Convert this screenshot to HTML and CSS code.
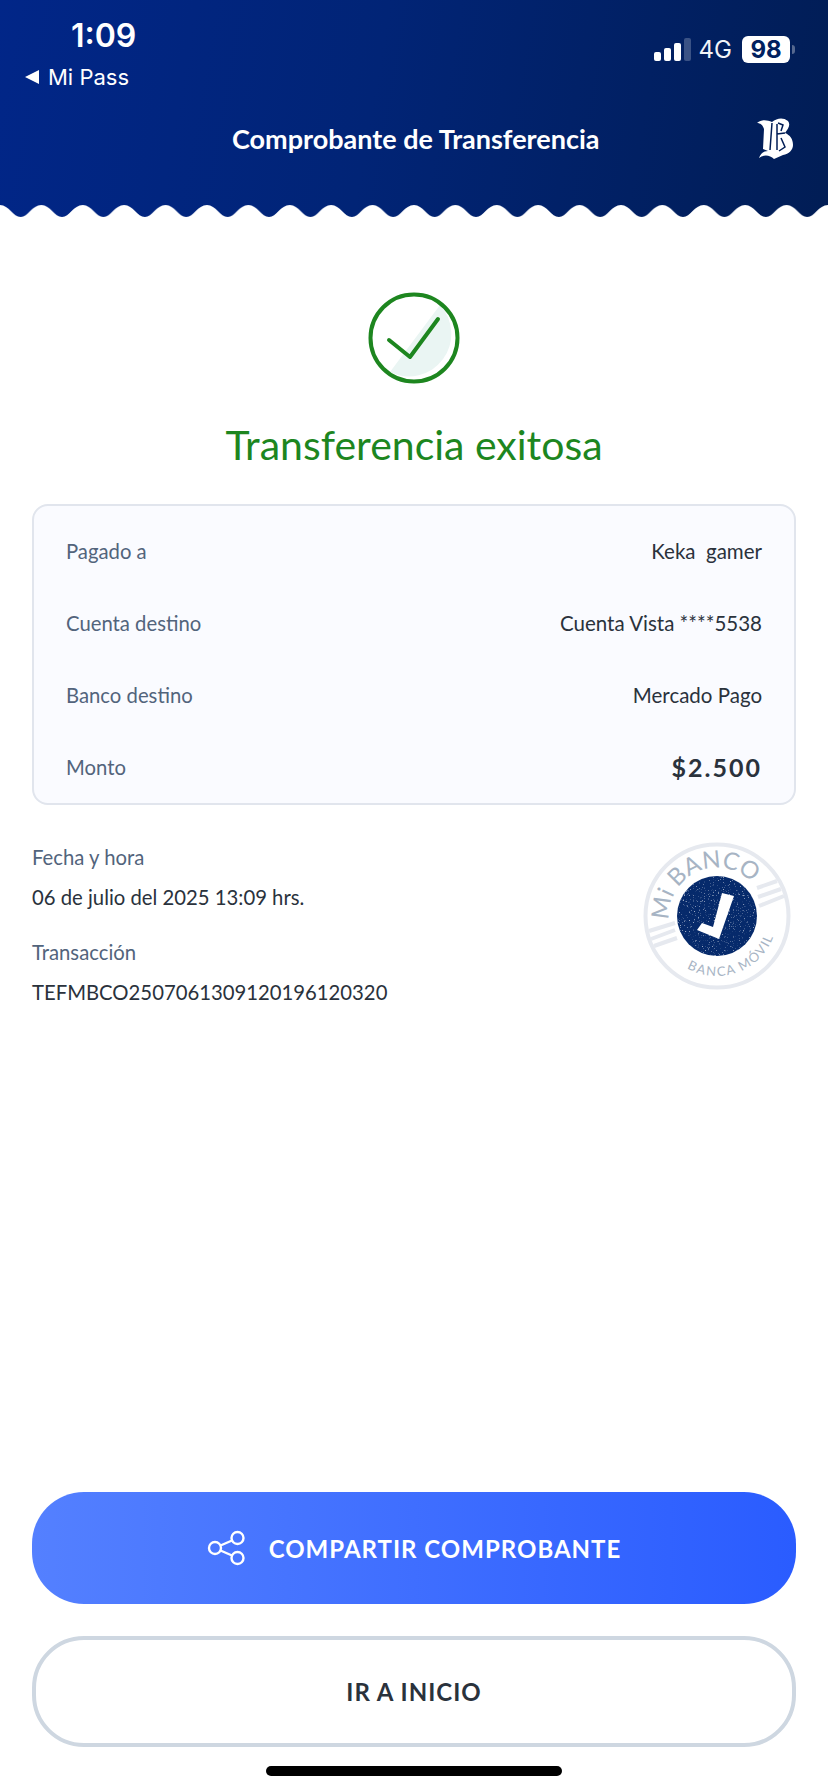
FILE: index.html

```html
<!DOCTYPE html>
<html lang="es">
<head>
  <meta charset="UTF-8" />
  <meta name="viewport" content="width=device-width, initial-scale=1.0" />
  <title>Comprobante de Transferencia</title>
  <link rel="stylesheet" href="styles.css">
</head>
<body>
  <div class="screen">
    <header class="top">
      <div class="status">
        <div class="status-left">
          <div class="clock">1:09</div>
          <div class="back"><span class="back-arrow"></span>Mi Pass</div>
        </div>
        <div class="status-right">
          <div class="signal">
            <span class="bar b1"></span><span class="bar b2"></span><span class="bar b3"></span><span class="bar b4"></span>
          </div>
          <span class="net">4G</span>
          <span class="battery">98</span>
          <span class="battery-tip"></span>
        </div>
      </div>
      <div class="title-row">
        <h1>Comprobante de Transferencia</h1>
        <svg class="logo" viewBox="6 8 38 43" width="38" height="43">
          <path fill="#fff" d="M7 14 C12 10 17 11 22 13 C27 9 33 8 38 12 C41 16 38 20 35 24 C40 26 43 30 43 36 C43 41 39 45 33 46 L24 50 C20 46 14 45 9 49 C11 44 14 42 18 42 L13 40 L14 20 C13 16 10 14 7 14 Z"/>
          <path fill="none" stroke="#011d55" stroke-width="1.5" d="M22 14 L20 41 M27 15 L27 41 M27 25 L35 24 M28 14 L33 16 L31 22 M31 29 L35 38 L29 42"/>
        </svg>
      </div>
      <svg class="wave" width="828" height="12" viewBox="0 0 828 12">
        <defs>
          <pattern id="wavePat" width="41.4" height="12" patternUnits="userSpaceOnUse">
            <path fill="#fff" d="M0 12 V0 C9 0 13 12 20.7 12 C28 12 32 0 41.4 0 V12 Z"/>
          </pattern>
        </defs>
        <rect width="828" height="12" fill="url(#wavePat)"/>
      </svg>
    </header>

    <main class="content">
      <svg class="ok-icon" viewBox="0 0 92 92" width="92" height="92">
        <path fill="#eaf5f3" d="M72 13 A42.5 42.5 0 0 1 22 80 Z"/>
        <circle cx="46" cy="46" r="43.5" fill="none" stroke="#1d861f" stroke-width="4"/>
        <path fill="none" stroke="#1d861f" stroke-width="4" stroke-linecap="round" stroke-linejoin="round" d="M21 48 L42 65 L70 27"/>
      </svg>
      <h2 class="ok-title">Transferencia exitosa</h2>

      <section class="card">
        <div class="row"><span class="lbl">Pagado a</span><span class="val">Keka&nbsp; gamer</span></div>
        <div class="row"><span class="lbl">Cuenta destino</span><span class="val">Cuenta Vista ****5538</span></div>
        <div class="row"><span class="lbl">Banco destino</span><span class="val">Mercado Pago</span></div>
        <div class="row"><span class="lbl">Monto</span><span class="val amount">$2.500</span></div>
      </section>

      <section class="details">
        <div class="detail-text">
          <div class="lbl">Fecha y hora</div>
          <div class="val detail-val">06 de julio del 2025 13:09 hrs.</div>
          <div class="lbl">Transacción</div>
          <div class="val detail-val">TEFMBCO2507061309120196120320</div>
        </div>
        <svg class="stamp" viewBox="0 0 150 154" width="150" height="154">
          <defs>
            <path id="arcTop" d="M27.2 81.1 A48 48 0 1 1 123 77"/>
            <path id="arcBottom" d="M45 129 A60 60 0 0 0 135 77"/>
            <filter id="specks" x="0" y="0" width="100%" height="100%">
              <feTurbulence type="fractalNoise" baseFrequency="0.8" numOctaves="2" seed="4"/>
              <feColorMatrix type="matrix" values="0 0 0 0 1  0 0 0 0 1  0 0 0 0 1  5 0 0 0 -3.1"/>
              <feComposite in2="SourceAlpha" operator="in"/>
            </filter>
          </defs>
          <circle cx="75" cy="77" r="71.5" fill="#fff" stroke="#e6e9ef" stroke-width="4"/>
          <g stroke="#e6e9ef" stroke-width="4">
            <path d="M7 92 L33 84 M9 100 L33 91 M12 107 L35 99 M115 49 L135 42 M116 58 L139 50 M117 67 L142 57"/>
          </g>
          <text class="stamp-big"><textPath href="#arcTop">Mi BANCO</textPath></text>
          <text class="stamp-small"><textPath href="#arcBottom">BANCA MÓVIL</textPath></text>
          <circle cx="75" cy="77" r="40" fill="#062a6b"/>
          <circle cx="75" cy="77" r="40" fill="#000" filter="url(#specks)" opacity=".6"/>
          <path fill="#fff" d="M80 54 L92 57 L77 100 L55 91 L60 84 L71 88 Z"/>
        </svg>
      </section>
    </main>

    <footer class="actions">
      <button class="btn btn-main">
        <svg viewBox="0 0 38 36" width="38" height="36" fill="none" stroke="#fff" stroke-width="2.4">
          <circle cx="8" cy="18" r="6"/><circle cx="30.5" cy="8" r="6"/><circle cx="30.5" cy="28" r="6"/>
          <path d="M13.5 15.5 L25 10.5 M13.5 20.5 L25 25.5"/>
        </svg>
        COMPARTIR COMPROBANTE
      </button>
      <button class="btn btn-line">IR A INICIO</button>
      <div class="home-bar"></div>
    </footer>
  </div>
</body>
</html>
```

FILE: styles.css

```css
* {
  box-sizing: border-box;
}

body {
  margin: 0;
  background: #fff;
  font-family: "Lato", "Noto Sans", sans-serif;
  color: #2a323c;
}

.screen {
  width: 828px;
  height: 1792px;
  display: flex;
  flex-direction: column;
  overflow: hidden;
}

.top {
  height: 217px;
  background: linear-gradient(100deg, #012688 0%, #012476 45%, #011d55 100%);
  color: #fff;
  display: flex;
  flex-direction: column;
}

.status {
  height: 96px;
  display: flex;
  justify-content: space-between;
}

.status-left {
  padding: 17px 0 0 25px;
}

.clock {
  margin-left: 46px;
  font-family: "Inter", sans-serif;
  font-size: 32px;
  font-weight: 600;
  line-height: 38px;
}

.back {
  display: flex;
  align-items: center;
  gap: 9px;
  font-family: "Inter", sans-serif;
  font-size: 22px;
  line-height: 26px;
  margin-top: 9px;
}

.back-arrow {
  width: 0;
  height: 0;
  border-top: 7px solid transparent;
  border-bottom: 7px solid transparent;
  border-right: 14px solid #fff;
}

.status-right {
  display: flex;
  align-items: center;
  height: 27px;
  margin-top: 36px;
  padding-right: 33px;
}

.signal {
  display: flex;
  align-items: flex-end;
  gap: 3px;
  height: 23px;
}

.bar {
  width: 7px;
  background: #fff;
  border-radius: 2px;
}

.b1 { height: 9px; }
.b2 { height: 13px; }
.b3 { height: 18px; }
.b4 { height: 23px; background: #3a5285; }

.net {
  margin-left: 8px;
  font-family: "Inter", sans-serif;
  font-size: 24px;
  color: #f2f4f8;
}

.battery {
  margin-left: 10px;
  width: 48px;
  height: 27px;
  background: #fff;
  border-radius: 6px;
  color: #01215f;
  font-family: "Inter", sans-serif;
  font-weight: 700;
  font-size: 24px;
  line-height: 27px;
  text-align: center;
}

.battery-tip {
  width: 3px;
  height: 9px;
  margin-left: 2px;
  background: #55688f;
  border-radius: 0 3px 3px 0;
}

.title-row {
  height: 44px;
  margin-top: 20px;
  display: flex;
  align-items: center;
  padding: 0 34px 0 232px;
  justify-content: space-between;
}

h1 {
  margin: 0;
  font-size: 27px;
  font-weight: 700;
}

.wave {
  display: block;
  margin-top: auto;
}

.content {
  flex: 1;
  padding: 0 32px;
  display: flex;
  flex-direction: column;
  align-items: center;
}

.ok-icon {
  margin-top: 75px;
}

.ok-title {
  margin: 36px 0 0;
  font-size: 41px;
  font-weight: 400;
  line-height: 50px;
  color: #1d861f;
}

.card {
  width: 100%;
  margin-top: 34px;
  padding: 9px 32px 0;
  background: #fafbff;
  border: 2px solid #e1e5ed;
  border-radius: 16px;
}

.row {
  height: 72px;
  display: flex;
  justify-content: space-between;
  align-items: center;
}

.lbl {
  font-size: 20.3px;
  color: #52647c;
}

.val {
  font-size: 20.5px;
  color: #2a323c;
}

.amount {
  font-size: 25px;
  font-weight: 700;
  letter-spacing: 2px;
}

.details {
  width: 100%;
  display: flex;
  justify-content: space-between;
}

.detail-text {
  padding-top: 40px;
}

.detail-val {
  font-size: 20.3px;
  margin: 16px 0 31px;
}

.stamp {
  margin: 34px 4px 0 0;
}

.stamp-big {
  font-size: 24px;
  fill: #a7b4c4;
}

.stamp-small {
  font-size: 13px;
  fill: #a7b4c4;
  letter-spacing: 1.5px;
}

.actions {
  padding: 0 32px 16px;
  display: flex;
  flex-direction: column;
  align-items: center;
}

.btn {
  width: 100%;
  height: 112px;
  border-radius: 52px;
  font-family: "Lato", "Noto Sans", sans-serif;
  font-size: 24px;
  font-weight: 700;
  letter-spacing: 1px;
  display: flex;
  align-items: center;
  justify-content: center;
  gap: 24px;
}

.btn-main {
  border: none;
  background: linear-gradient(90deg, #5480ff 0%, #2a5cff 100%);
  color: #fff;
}

.btn-line {
  height: 111px;
  margin-top: 32px;
  background: #fff;
  border: 4px solid #ced7e1;
  color: #2a323c;
}

.home-bar {
  width: 296px;
  height: 10px;
  margin-top: 19px;
  background: #000;
  border-radius: 5px;
}
```
